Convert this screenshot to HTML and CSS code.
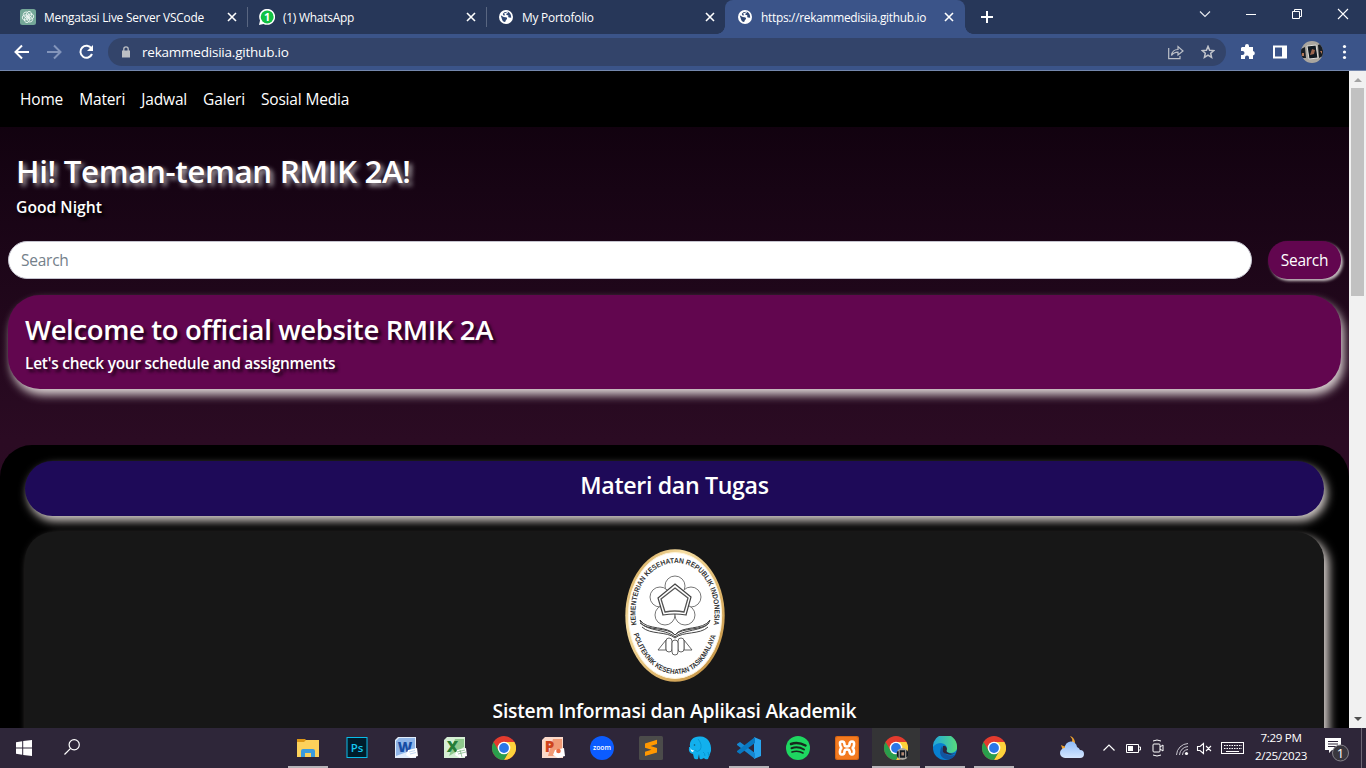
FILE: index.html
```html
<!DOCTYPE html>
<html lang="id">
<head>
<meta charset="utf-8">
<title>RMIK 2A</title>
<link rel="stylesheet" href="styles.css">
</head>
<body>
<svg class="defs" width="0" height="0">
  <defs>
    <symbol id="globe" viewBox="0 0 14 14"><circle cx="7" cy="7" r="7" fill="#fff"/><path d="M1.800 5.500C3 5.500 4.500 7.500 6.500 7.300 8 7.300 8.500 8.500 7.600 9.500 6.500 10 6.800 11.500 6 12 4.500 12 3.300 10.500 3 9.200ZM5.300 2.200 8.500 1.800C9.500 2.400 8.600 3.500 7.400 3.700 6.500 4.500 8 5 9.300 5.200 9.600 6.300 8.600 6.500 9.800 7.400L12.200 7.700C12.300 5 11.300 2.800 9 1.800L7 2.800 5 3.600 6.200 5.300 4.600 5.500 3.700 4Z" fill="#304773"/></symbol>
    <symbol id="x" viewBox="0 0 10 10"><path d="M1 1 9 9M9 1 1 9" stroke="#fff" stroke-width="1.600"/></symbol>
    <symbol id="chrome" viewBox="0 0 24 24"><circle cx="12" cy="12" r="12" fill="#e33b2e"/><path d="M12 6h10.400A12 12 0 0 1 12 24L17.200 15Z" fill="#fdd23b"/><path d="M1.600 6A12 12 0 0 0 12 24l5.200-9H6.800Z" fill="#2a9e4c"/><circle cx="12" cy="12" r="6.300" fill="#fff"/><circle cx="12" cy="12" r="4.900" fill="#2b76e8"/></symbol>
    <symbol id="sheet" viewBox="0 0 12 10"><path d="M2 2 11 0 12 8 5 10 0 7Z" fill="#fff"/></symbol>
    <linearGradient id="gold" x2="1" y2="1"><stop stop-color="#c99743"/><stop offset=".3" stop-color="#f5dda2"/><stop offset=".7" stop-color="#d9ae62"/><stop offset="1" stop-color="#b98536"/></linearGradient>
    <linearGradient id="edgeTop"><stop stop-color="#20a4dc"/><stop offset="1" stop-color="#57dc7c"/></linearGradient>
    <linearGradient id="cloud" x2="0" y2="1"><stop stop-color="#8fbcf8"/><stop offset="1" stop-color="#d5e6ff"/></linearGradient>
    <clipPath id="round"><circle cx="11" cy="11" r="11"/></clipPath>
  </defs>
</svg>

<header class="browser">
  <div class="tabs">
    <div class="tab">
      <svg class="fav" viewBox="0 0 16 16"><rect width="16" height="16" rx="2.500" fill="#74a798"/><g fill="none" stroke="#e9f3f0" stroke-width=".9"><ellipse cx="8" cy="5.500" rx="2.600" ry="3.300" transform="rotate(20 8 8)"/><ellipse cx="8" cy="5.500" rx="2.600" ry="3.300" transform="rotate(80 8 8)"/><ellipse cx="8" cy="5.500" rx="2.600" ry="3.300" transform="rotate(140 8 8)"/><ellipse cx="8" cy="5.500" rx="2.600" ry="3.300" transform="rotate(200 8 8)"/><ellipse cx="8" cy="5.500" rx="2.600" ry="3.300" transform="rotate(260 8 8)"/><ellipse cx="8" cy="5.500" rx="2.600" ry="3.300" transform="rotate(320 8 8)"/></g></svg>
      <span class="tab-title">Mengatasi Live Server VSCode</span><svg class="close"><use href="#x"/></svg>
    </div>
    <div class="tab">
      <svg class="fav" viewBox="0 0 16 16"><path d="M0 16 1 11.500A8 8 0 1 1 4.500 15Z" fill="#fff"/><circle cx="8.200" cy="7.900" r="6.500" fill="#12c143"/><text x="8" y="11.500" text-anchor="middle" class="badge-one">1</text></svg>
      <span class="tab-title">(1) WhatsApp</span><svg class="close"><use href="#x"/></svg>
    </div>
    <div class="tab">
      <svg class="globe"><use href="#globe"/></svg>
      <span class="tab-title">My Portofolio</span><svg class="close"><use href="#x"/></svg>
    </div>
    <div class="tab active">
      <svg class="globe"><use href="#globe"/></svg>
      <span class="tab-title address-title">https://rekammedisiia.github.io</span><svg class="close"><use href="#x"/></svg>
    </div>
    <svg class="plus" width="12" height="12" viewBox="0 0 12 12"><path d="M6 0V12M0 6H12" stroke="#fff" stroke-width="2"/></svg>
    <div class="window-buttons">
      <svg viewBox="0 0 46 28"><path d="M18 11.500 23 16.500 28 11.500" fill="none" stroke="#e4e7ed" stroke-width="1.200"/></svg>
      <svg viewBox="0 0 46 28"><path d="M18 14.500H28" stroke="#fff"/></svg>
      <svg viewBox="0 0 46 28"><path d="M18.500 11.500h7v7h-7zM20.500 11V9.500h7v7H26" fill="none" stroke="#fff"/></svg>
      <svg viewBox="0 0 46 28"><path d="M18 9 28 19M28 9 18 19" stroke="#fff" stroke-width="1.100"/></svg>
    </div>
  </div>
  <div class="toolbar">
    <svg class="tool-nav" width="100" height="36" viewBox="0 0 100 36"><g fill="none" stroke-width="2"><path d="M29 18H16M22 11.500 15.500 18 22 24.500" stroke="#fff"/><path d="M47 18H60M54 11.500 60.500 18 54 24.500" stroke="#8395bb"/><path d="M91.500 14.500A6 6 0 1 0 92 20" stroke="#fff"/></g><path d="M93 11v6h-6Z" fill="#fff"/></svg>
    <div class="address">
      <svg width="8" height="12" viewBox="0 0 8 12"><path d="M0 4.500H8V11.500H0Z" fill="#bcbfc4"/><path d="M1.800 5V3A2.200 2.200 0 0 1 6.200 3V5" fill="none" stroke="#bcbfc4" stroke-width="1.300"/></svg>
      <span class="url">rekammedisiia.github.io</span>
      <svg class="share" width="16" height="15" viewBox="0 0 16 15" fill="none" stroke="#bcc0c8" stroke-width="1.200"><path d="M.7 3V13.700H12V11"/><path d="M3.500 10.500C4 6.500 6.500 4.500 10 4.500V1.500L15 6 10 10V7.200C7 7.200 5 8.200 3.500 10.500Z"/></svg>
      <svg class="star" width="14" height="14" viewBox="0 0 14 14"><path d="M7 1.400 8.600 5.200 12.800 5.600 9.700 8.300 10.600 12.400 7 10.200 3.400 12.400 4.300 8.300 1.200 5.600 5.400 5.200Z" fill="none" stroke="#c2c5cc" stroke-width="1.500"/></svg>
    </div>
    <svg class="tool-right" width="140" height="36" viewBox="0 0 140 36">
      <path d="M16 13H19V12A2 2 0 0 1 23 12V13H27V17A2.300 2.300 0 0 1 27 21.500V25H23V23.500A2 2 0 0 0 19 23.500V25H15V21H16.500A2 2 0 0 0 16.500 17H15V14Z" fill="#fff"/>
      <path d="M47 11.500H61V24.500H47ZM49 13.500V22.500H56V13.500Z" fill="#fff" fill-rule="evenodd"/>
      <g transform="translate(75 7)" clip-path="url(#round)"><rect width="22" height="22" fill="#aaa69f"/><path d="M0 8 4 6 5 17 0 17M17 4 22 2V15L18 17" fill="#181d23"/><path d="M6 5 15 4 17 17 8 18Z" fill="#101820" stroke="#e0ded9"/><path d="M11 8 14 9 13 13 9 14Z" fill="#9b654e"/><path d="M1 12H3V15H1ZM19 10H21V13" fill="#b47757"/></g>
      <circle cx="118.500" cy="12.500" r="1.600" fill="#fff"/><circle cx="118.500" cy="18" r="1.600" fill="#fff"/><circle cx="118.500" cy="23.500" r="1.600" fill="#fff"/>
    </svg>
  </div>
</header>

<div class="viewport">
  <main class="page">
    <nav class="menu"><a>Home</a><a>Materi</a><a>Jadwal</a><a>Galeri</a><a>Sosial Media</a></nav>
    <section class="greeting"><h1><span>Hi! Teman-teman RMIK 2A!</span></h1><p><span>Good Night</span></p></section>
    <form class="search"><div class="field"><span>Search</span></div><div class="go"><span>Search</span></div></form>
    <section class="welcome"><h2><span>Welcome to official website RMIK 2A</span></h2><p><span>Let's check your schedule and assignments</span></p></section>
    <section class="materials">
      <h3><span>Materi dan Tugas</span></h3>
      <article class="card">
        <svg class="logo" viewBox="0 0 100 133">
          <ellipse cx="50" cy="66.500" rx="49.700" ry="66.200" fill="url(#gold)"/>
          <ellipse cx="50" cy="66.500" rx="46.700" ry="63" fill="#fff" stroke="#fff4d9" stroke-width="1"/>
          <path id="arcTop" d="M11.500 76C6 43 23 15 50 14S94 43 88.500 76" fill="none"/>
          <path id="arcBottom" d="M8.500 85C16 108 30 124 50 125S84 108 91.500 85" fill="none"/>
          <text class="seal"><textPath href="#arcTop" textLength="166" lengthAdjust="spacingAndGlyphs">KEMENTERIAN KESEHATAN REPUBLIK INDONESIA</textPath></text>
          <text class="seal"><textPath href="#arcBottom" textLength="122" lengthAdjust="spacingAndGlyphs">POLITEKNIK KESEHATAN TASIKMALAYA</textPath></text>
          <g fill="#fff" stroke="#777" stroke-width="1"><circle cx="50" cy="37" r="10"/><circle cx="35" cy="48" r="10"/><circle cx="66" cy="48" r="10"/><circle cx="40" cy="66" r="10"/><circle cx="60" cy="66" r="10"/></g>
          <path d="M50 35 66 48 61 66Q50 64 38 66L33 49Z" fill="#fff" stroke="#444" stroke-width="1.200"/><path d="M50 39 63 49 59 63Q50 61 40 63L36 50Z" fill="#fff" stroke="#555" stroke-width="1.300"/>
          <g fill="none" stroke="#444" stroke-width="1"><path d="M50 86C43 76 22 82 15 71 18 83 40 79 50 88 60 79 82 83 85 71 78 82 57 76 50 86Z"/><path d="M17 78C25 86 42 82 50 89 58 82 75 86 83 78M15 74C23 82 43 78 50 86 57 78 77 82 84 74"/></g>
          <g fill="#fff" stroke="#555" stroke-width=".9"><path d="M33 101 41 91V101ZM67 101 59 91V101Z"/><rect x="41" y="89" width="6" height="14" rx="3"/><rect x="53" y="89" width="6" height="14" rx="3"/><rect x="47" y="91" width="6" height="15" rx="3"/></g>
        </svg>
        <h4><span>Sistem Informasi dan Aplikasi Akademik</span></h4>
      </article>
    </section>
  </main>
  <aside class="scrollbar"><i class="up"></i><i class="thumb"></i><i class="down"></i></aside>
</div>

<footer class="taskbar">
  <div class="start"><svg width="16" height="16" viewBox="0 0 16 16"><path d="M0 2.200 6.200 1.300V7.500H0ZM7.200 1.100 16 0V7.500H7.200ZM0 8.500H6.200V14.700L0 13.800ZM7.200 8.500H16V16L7.200 14.900Z" fill="#fff"/></svg></div>
  <div class="find"><svg width="16" height="16" viewBox="0 0 16 16" fill="none" stroke="#fff" stroke-width="1.200"><circle cx="10.200" cy="5.800" r="5.100"/><path d="M6.600 9.400.5 15.500"/></svg></div>
  <div class="apps">
    <div class="app open"><svg viewBox="0 0 24 24"><path d="M1 3H9L11 5V8H1Z" fill="#dc9716"/><path d="M1 6H8L10 4H23V21H1Z" fill="#fcd15b"/><path d="M5 21V15Q5 13 7 13H17Q19 13 19 15V21H15V17H9V21Z" fill="#3a9bde"/></svg></div>
    <div class="app"><svg viewBox="0 0 24 24"><rect x="2" y="1.500" width="20" height="20" fill="#001d2b" stroke="#08bdea"/><text x="12" y="15.500" text-anchor="middle" class="ps">Ps</text></svg></div>
    <div class="app"><svg viewBox="0 0 24 24"><path d="M4 1H22V22H1V4Z" fill="#e2edfb"/><path d="M5 2H21V13L2 20V5Z" fill="#8fb5e8"/><text x="11" y="15.500" text-anchor="middle" class="office word">W</text><use href="#sheet" x="12" y="12" width="12" height="10"/><path d="M15 16 21 14.500M16 18 22 16.500" stroke="#a6c5ea" stroke-width=".7"/></svg></div>
    <div class="app"><svg viewBox="0 0 24 24"><path d="M4 1H22V22H1V4Z" fill="#d6efd5"/><path d="M12 3H21V11L6 20Z" fill="#8fc98d"/><text x="9.500" y="16" text-anchor="middle" class="office excel">X</text><use href="#sheet" x="12" y="12" width="12" height="10"/><path d="M14 16 22 14M15 18 23 16M17 14 19 21" stroke="#72af79" stroke-width=".7"/></svg></div>
    <div class="app"><svg viewBox="0 0 24 24"><use href="#chrome" width="24" height="24"/></svg></div>
    <div class="app"><svg viewBox="0 0 24 24"><path d="M4 1H22V22H1V4Z" fill="#fbd9ca"/><path d="M12 3H21V20H7Z" fill="#f19b76"/><text x="8.500" y="15.500" text-anchor="middle" class="office point">P</text><use href="#sheet" x="12" y="12" width="12" height="10"/><circle cx="17.500" cy="15" r="2.300" fill="#ea6a41"/></svg></div>
    <div class="app"><svg viewBox="0 0 24 24"><circle cx="12" cy="12" r="12" fill="#0b5cff"/><text x="12" y="14" text-anchor="middle" class="zoom">zoom</text></svg></div>
    <div class="app"><svg viewBox="0 0 24 24"><rect width="24" height="24" rx="1.500" fill="#4b4b4a"/><path d="M6 7.500 18 3.800V8L11.500 10 18 12V16.500L6 20V15.800L12.500 13.800 6 11.800Z" fill="#ff9800"/></svg></div>
    <div class="app"><svg viewBox="0 0 24 24"><path d="M2 11C1 4 6 0 12 .5 19 0 24 7 23 15L20 23Q17 24 16 22L14 23Q12 24 11.500 22L11 18 10 23Q7 24 6 22L5 18Q0 17 1 11Z" fill="#12b0ed"/><path d="M10 3Q15 9 12 14 9 17 7 14M17 20Q17 17 15 16M21 20 20 16" fill="none" stroke="#0797d2"/><path d="M2.500 12Q3.500 15 6 14L5 16Q2.500 16 2.500 12Z" fill="#fff"/><circle cx="6.500" cy="9" r=".8" fill="#155269"/></svg></div>
    <div class="app open"><svg viewBox="0 0 24 24"><path d="M17 1 24 4V20L17 23Z" fill="#28a5ee"/><path d="M0 8 3 6 18 17V23L0 9Z" fill="#1688d2"/><path d="M0 16 3 18 18 7V1L0 15Z" fill="#0878c1"/></svg></div>
    <div class="app"><svg viewBox="0 0 24 24"><circle cx="12" cy="12" r="12" fill="#1ed760"/><g fill="none" stroke="#17291d" stroke-linecap="round"><path d="M5 8Q12 5.500 19.500 9.500" stroke-width="2.500"/><path d="M5.500 12.200Q12 10 18 13.500" stroke-width="2"/><path d="M6 16Q12 14.200 17 17" stroke-width="1.600"/></g></svg></div>
    <div class="app"><svg viewBox="0 0 24 24"><rect width="24" height="24" rx="2" fill="#d96613"/><rect x="1" y="1" width="22" height="22" rx="2" fill="#f37a20"/><path d="M5 7Q5 5.500 7 5.500 9.500 5.500 9.500 8.500 9.500 10.500 12 10.500T14.500 8.500Q14.500 5.500 17 5.500T19 8.500Q19 12 16.500 12 19 12 19 15.500 19 18.500 17 18.500T14.500 15.500Q14.500 13.500 12 13.500T9.500 15.500Q9.500 18.500 7 18.500T5 15.500Q5 12 7.500 12 5 12 5 7Z" fill="none" stroke="#fff" stroke-width="2.600"/></svg></div>
    <div class="app current"><svg viewBox="0 0 24 24"><use href="#chrome" width="24" height="24"/><g transform="translate(12.500 12) scale(.54)" clip-path="url(#round)"><rect width="22" height="22" fill="#aaa69f"/><path d="M0 6H4V18H0M18 4H22V17H18M6 4H16V18H6Z" fill="#111820"/><path d="M9 8H14V14H9Z" fill="#b18a75"/></g></svg></div>
    <div class="app open"><svg viewBox="0 0 24 24"><circle cx="12" cy="12" r="12" fill="#087fd0"/><path d="M0 11A12 12 0 0 1 24 10Q25 16 18 17 12 17 14 13 14 8 8 7 3 7 0 11Z" fill="url(#edgeTop)"/><path d="M9 10Q4 19 12 23 19 25 23 18 18 21 13 18 9 16 9 10Z" fill="#12549f"/><path d="M10 10Q8 17 14 18 18 20 23 17 18 19 14 16 13 15 14 13 13 9 10 10Z" fill="#2d263b"/></svg></div>
    <div class="app open"><svg viewBox="0 0 24 24"><use href="#chrome" width="24" height="24"/></svg></div>
  </div>
  <svg class="weather" width="25" height="24" viewBox="0 0 25 24"><path d="M10 0Q15 5 9 10 6 12 1 9L3 15H14L15 6Q14 1 10 0Z" fill="#f0a42f"/><path d="M5 22A5 5 0 0 1 5 12 6 6 0 0 1 17 11 5 5 0 0 1 20 14 4 4 0 0 1 20 22Z" fill="url(#cloud)"/></svg>
  <svg class="tray" width="150" height="40" viewBox="0 0 150 40" fill="none" stroke="#fff">
    <path d="M8.500 22.500 14 17 19.500 22.500" stroke-width="1.200"/>
    <path d="M31.500 16.500H43.500V24.500H31.500ZM44 19H45.500V22H44"/><path d="M33 18H38V23H33Z" fill="#fff" stroke="none"/>
    <path d="M59 16H64Q65 16 65 17V23Q65 24 64 24H59Q58 24 58 23V17Q58 16 59 16ZM65 19 68 17V23L65 21M58 13Q62 11 66 13M58 27Q62 29 66 27"/>
    <path d="M81.500 27A12 12 0 0 1 93 15.500M84.500 27A9 9 0 0 1 93 18.500M87.500 27A6 6 0 0 1 93 21.500" stroke="#c9c6cf"/><circle cx="91.500" cy="25.500" r="1.600" fill="#fff" stroke="none"/>
    <path d="M102.500 18.500H105L108.500 15.500V25.500L105 22.500H102.500ZM111 18 116 23M116 18 111 23" stroke-width="1.100"/>
    <rect x="126.500" y="14.500" width="22" height="11"/><path d="M129 17.500H147M129 20.500H147" stroke-dasharray="1.500 1"/><path d="M131 23.500H144"/>
  </svg>
  <div class="clock"><span class="time">7:29 PM</span><span class="date">2/25/2023</span></div>
  <svg class="notice" width="26" height="26" viewBox="0 0 26 26"><path d="M1 1H17V13H8L5 16V13H1Z" fill="#fff"/><path d="M4 4.500H14M4 7H14M4 9.500H12" stroke="#2f263b"/><circle cx="16.500" cy="16" r="8" fill="#39363e" stroke="#85828a"/><text x="16.500" y="20.500" text-anchor="middle" class="note-count">1</text></svg>
</footer>
</body>
</html>
```
FILE: styles.css
```css
* { box-sizing: border-box; }
body { margin: 0; width: 1366px; height: 768px; overflow: hidden; display: flex; flex-direction: column; font-family: "Open Sans", "Noto Sans", sans-serif; color: #fff; background: #000; }
h1, h2, h3, h4, p { margin: 0; font-weight: 600; }
span, a { white-space: nowrap; }
svg { display: block; flex: none; }
.defs { position: absolute; }
.browser { height: 71px; flex: none; border-bottom: 1px solid #7487ad; background: #3b5489; }
.tabs { height: 34px; padding-left: 9px; display: flex; align-items: center; background: #273759; }
.tab { width: 239px; height: 34px; padding: 0 11px; display: flex; align-items: center; gap: 8px; background: linear-gradient(#596681, #596681) right center / 1px 20px no-repeat; font-size: 11.9px; letter-spacing: -0.22px; }
.tab-title { padding-bottom: 1px; }
.address-title { letter-spacing: -0.29px; }
.tab:nth-child(3) { padding-left: 12px; background: none; }
.tab:nth-child(3) .tab-title, .tab.active .tab-title { margin-left: 1px; }
.tab.active { width: 240px; margin-left: -1px; background: #3b5489; border-radius: 8px 8px 0 0; padding-left: 13px; position: relative; }
.tab.active::before, .tab.active::after { content: ""; position: absolute; bottom: 0; width: 8px; height: 8px; }
.tab.active::before { left: -8px; background: radial-gradient(circle at 0 0, transparent 7.500px, #3b5489 8px); }
.tab.active::after { right: -8px; background: radial-gradient(circle at 100% 0, transparent 7.500px, #3b5489 8px); }
.fav { width: 16px; height: 16px; }
.globe { width: 14px; height: 14px; }
.close { width: 10px; height: 10px; margin-left: auto; }
.badge-one { font: 700 11px "Open Sans", sans-serif; fill: #fff; }
.plus { margin-left: 16px; }
.window-buttons { display: flex; margin-left: auto; height: 34px; }
.window-buttons svg { width: 46px; height: 28px; }
.toolbar { height: 36px; display: flex; align-items: center; }
.tool-nav { margin-right: 8px; }
.address { width: 1118px; height: 28px; padding: 0 11px 0 14px; display: flex; align-items: center; border-radius: 14px; background: #33446a; }
.url { font-size: 13.500px; letter-spacing: -0.22px; margin-left: 12px; }
.share { margin-left: auto; }
.star { margin-left: 17px; }
.viewport { height: 657px; display: flex; flex: none; overflow: hidden; }
.page { width: 1349px; height: 657px; overflow: hidden; background: linear-gradient(#0d000b 0, #170414 18%, #2b0b23 56%, #2e0c26 100%); }
.menu { height: 56px; background: #000; display: flex; align-items: center; gap: 16px; padding: 0 20px; font-size: 15.500px; letter-spacing: -0.16px; }
.greeting { height: 114px; padding: 25px 16px 0; }
h1 { font-size: 31.300px; line-height: 38px; letter-spacing: -0.34px; text-shadow: 3px 3px 5px rgba(255,255,255,.7); }
.greeting p { margin-top: 5px; font-size: 15.700px; line-height: 24px; text-shadow: 3px 3px 3px #000; }
.search { display: flex; gap: 16px; height: 38px; padding: 0 8px; font-size: 15.500px; letter-spacing: -0.25px; line-height: 36px; }
.field { width: 1244px; border: 1px solid #c4c3ce; border-radius: 19px; background: #fff; color: #74808a; padding-left: 12px; }
.go { width: 73px; border-radius: 19px; background: #62064f; text-align: center; line-height: 38px; box-shadow: 2px 2px 3px #c8bfc2; }
.welcome { height: 94px; margin: 16px 8px 56px; padding: 17px; border-radius: 32px; background: #62064f; box-shadow: 3px 6px 10px #d9cfd0; }
h2 { font-size: 27.500px; letter-spacing: -0.36px; line-height: 36px; text-shadow: 3px 3px 3px rgba(0,0,0,.7); }
.welcome p { margin-top: 4px; font-size: 15.400px; letter-spacing: -0.22px; line-height: 24px; text-shadow: 3px 3px 3px rgba(0,0,0,.7); }
.materials { height: 283px; padding: 16px 25px 0; background: #000; border-radius: 32px 32px 0 0; }
h3 { height: 55px; border-radius: 28px; background: #1e0a58; text-align: center; font-size: 23.200px; letter-spacing: -0.35px; line-height: 49px; box-shadow: 3px 5px 10px #d2cbc8; }
.card { height: 230px; margin-top: 16px; padding-top: 17px; border-radius: 28px; background: #171717; box-shadow: 5px 5px 10px #d2cbc8; display: flex; align-items: center; flex-direction: column; }
.logo { width: 100px; height: 133px; }
.seal { font: 700 7.300px "Liberation Sans", sans-serif; fill: #333; }
h4 { margin-top: 14px; font-size: 19.300px; letter-spacing: -0.24px; line-height: 30px; }
.scrollbar { width: 17px; background: #f1f1f1; display: flex; flex-direction: column; align-items: center; }
.up { border: 4px solid transparent; border-top: 0; border-bottom-color: #a3a3a3; margin-top: 7px; }
.thumb { width: 13px; height: 208px; margin-top: 6px; background: #c1c1c1; }
.down { border: 4px solid transparent; border-bottom: 0; border-top-color: #505050; margin: auto 0 7px; }
.taskbar { height: 40px; flex: none; background: #2e2639; display: flex; align-items: center; }
.start { width: 48px; padding: 0 0 1px 16px; }
.find { width: 235px; padding: 0 0 2px 16px; }
.apps { display: flex; height: 40px; }
.app { width: 49px; height: 40px; padding: 8px 12.500px; }
.app > svg { width: 24px; height: 24px; }
.app.open { background: linear-gradient(#b7b4b9, #b7b4b9) center bottom / 40px 2px no-repeat; }
.app.current { background: linear-gradient(#b7b4b9, #b7b4b9) center bottom / 48px 2px no-repeat, linear-gradient(#343436, #343436) center / 48px 40px no-repeat; }
.ps { font: 600 11.500px "Open Sans", sans-serif; fill: #16c7ef; }
.office { font: 800 15px "Open Sans", sans-serif; }
.word { fill: #174da4; font-size: 14px; }
.excel { fill: #257d37; font-size: 16px; }
.point { fill: #cf431d; }
.zoom { font: 600 6.800px "Open Sans", sans-serif; fill: #fff; }
.weather { margin-left: 42px; }
.tray { margin-left: 10px; }
.clock { width: 62px; margin-left: 5px; display: flex; flex-direction: column; align-items: center; font-size: 11.600px; letter-spacing: -0.3px; line-height: 18px; padding-bottom: 2px; }
.notice { margin: 3px 11px 0 12px; }
.note-count { font: 13px "Open Sans", sans-serif; fill: #fff; }
.taskbar::after { content: ""; width: 1px; height: 40px; background: #6d6774; }
```
